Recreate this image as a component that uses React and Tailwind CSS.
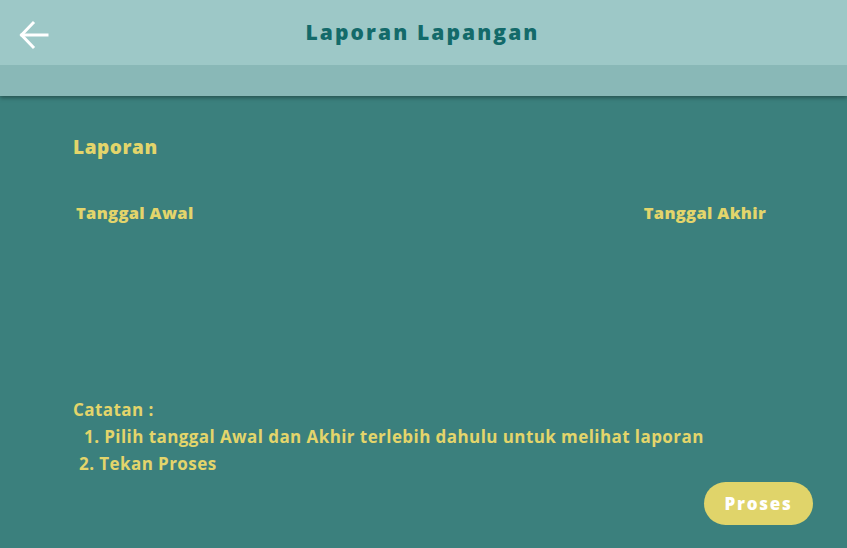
import React from "react";

export default function App() {
  return (
    <div className="w-[847px] h-[548px] overflow-hidden bg-[#3b807d] flex flex-col" style={{ fontFamily: '"Open Sans", "Liberation Sans", sans-serif' }}>
      <div className="relative z-10 shadow-[0_2px_4px_rgba(0,0,0,0.35)]">
        <div className="h-[65px] bg-[#9dc8c7] flex items-center px-[18px] relative">
          <svg width="32" height="30" viewBox="0 0 32 30" fill="none" stroke="white" strokeWidth="3" strokeLinecap="square" className="mt-[4px]">
            <path d="M29 15 H4" />
            <path d="M15 3 L3.5 15 L15 27" />
          </svg>
          <div className="absolute left-0 right-0 top-[18px] text-center text-[21px] font-extrabold tracking-[0.1em] text-[#136a6a] leading-[28px] pr-[2px]">
            Laporan Lapangan
          </div>
        </div>
        <div className="h-[31px] bg-[#89b8b7]" />
      </div>
      <div className="flex-1 flex flex-col px-[73px] pt-[36px] text-[#e3d56b]">
        <div className="text-[19px] font-extrabold leading-[30px] tracking-[0.03em]">Laporan</div>
        <div className="flex justify-between mt-[40px] pl-[3px] pr-[8px] text-[16.5px] font-extrabold leading-[22px] tracking-[0.02em]">
          <span>Tanggal Awal</span>
          <span>Tanggal Akhir</span>
        </div>
        <div className="mt-[172px] text-[17px] font-bold leading-[27px] tracking-[0.025em]">
          <div>Catatan :</div>
          <div className="pl-[11px]">1. Pilih tanggal Awal dan Akhir terlebih dahulu untuk melihat laporan</div>
          <div className="pl-[6px]">2. Tekan Proses</div>
        </div>
        <div className="flex justify-end mr-[-39px] mt-[5px]">
          <button className="w-[109px] h-[43px] rounded-full bg-[#e0d46a] text-white text-[17px] font-extrabold tracking-[0.1em]">
            Proses
          </button>
        </div>
      </div>
    </div>
  );
}
